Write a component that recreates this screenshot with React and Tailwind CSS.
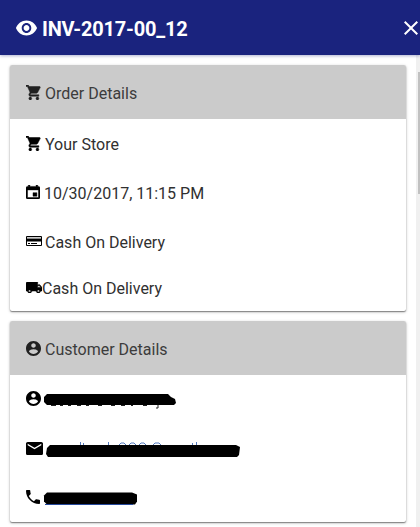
import React from 'react';

const paths = {
    eye: 'M12 4.5C7 4.5 2.73 7.61 1 12c1.73 4.39 6 7.5 11 7.5s9.27-3.11 11-7.5c-1.73-4.39-6-7.5-11-7.5zM12 17c-2.76 0-5-2.24-5-5s2.24-5 5-5 5 2.24 5 5-2.24 5-5 5zm0-8c-1.66 0-3 1.34-3 3s1.34 3 3 3 3-1.34 3-3-1.34-3-3-3z',
    close: 'M19 6.41L17.59 5 12 10.59 6.41 5 5 6.41 10.59 12 5 17.59 6.41 19 12 13.41 17.59 19 19 17.59 13.41 12z',
    cart: 'M7 18c-1.1 0-1.99.9-1.99 2S5.9 22 7 22s2-.9 2-2-.9-2-2-2zM1 2v2h2l3.6 7.59-1.35 2.45c-.16.28-.25.61-.25.96 0 1.1.9 2 2 2h12v-2H7.42c-.14 0-.25-.11-.25-.25l.03-.12.9-1.63h7.45c.75 0 1.41-.41 1.75-1.03l3.58-6.49c.08-.14.12-.31.12-.48 0-.55-.45-1-1-1H5.21l-.94-2H1zm16 16c-1.1 0-1.99.9-1.99 2s.89 2 1.99 2 2-.9 2-2-.9-2-2-2z',
    event: 'M17 12h-5v5h5v-5zM16 1v2H8V1H6v2H5c-1.11 0-1.99.9-1.99 2L3 19c0 1.1.89 2 2 2h14c1.1 0 2-.9 2-2V5c0-1.1-.9-2-2-2h-1V1h-2zm3 18H5V8h14v11z',
    truck: 'M20 8h-3V4H3c-1.1 0-2 .9-2 2v11h2c0 1.66 1.34 3 3 3s3-1.34 3-3h6c0 1.66 1.34 3 3 3s3-1.34 3-3h2v-5l-3-4zM6 18.5c-.83 0-1.5-.67-1.5-1.5s.67-1.5 1.5-1.5 1.5.67 1.5 1.5-.67 1.5-1.5 1.5zm13.5-9l1.96 2.5H17V9.5h2.5zm-1.5 9c-.83 0-1.5-.67-1.5-1.5s.67-1.5 1.5-1.5 1.5.67 1.5 1.5-.67 1.5-1.5 1.5z',
    account: 'M12 2C6.48 2 2 6.48 2 12s4.48 10 10 10 10-4.48 10-10S17.52 2 12 2zm0 3c1.66 0 3 1.34 3 3s-1.34 3-3 3-3-1.34-3-3 1.34-3 3-3zm0 14.2c-2.5 0-4.71-1.28-6-3.22.03-1.99 4-3.08 6-3.08 1.99 0 5.97 1.09 6 3.08-1.29 1.94-3.5 3.22-6 3.22z',
    mail: 'M20 4H4c-1.1 0-1.99.9-1.99 2L2 18c0 1.1.9 2 2 2h16c1.1 0 2-.9 2-2V6c0-1.1-.9-2-2-2zm0 4l-8 5-8-5V6l8 5 8-5v2z',
    phone: 'M6.62 10.79c1.44 2.83 3.76 5.14 6.59 6.59l2.2-2.2c.27-.27.67-.36 1.02-.24 1.12.37 2.33.57 3.57.57.55 0 1 .45 1 1V20c0 .55-.45 1-1 1-9.39 0-17-7.61-17-17 0-.55.45-1 1-1h3.5c.55 0 1 .45 1 1 0 1.25.2 2.45.57 3.57.11.35.03.74-.25 1.02l-2.2 2.2z',
};

const Icon = ({ name, box = '0 0 24 24', className }) => (
    <svg viewBox={box} preserveAspectRatio="none" fill="currentColor" className={`shrink-0 ${className}`}>
        <path d={paths[name]} />
    </svg>
);

const CartIcon = () => (
    <Icon name="cart" box="1 2 21 20" className="w-[15px] h-[15px] mr-[5px] -mt-[3px] stroke-current stroke-[0.7]" />
);
const AccountIcon = () => <Icon name="account" box="2 2 20 20" className="w-[15px] h-[15px] -mt-[3px]" />;

const CardIcon = () => (
    <svg viewBox="0 0 16 11" className="w-4 h-[11px] shrink-0 mr-1 -mt-[3px]">
        <path d="M.5.5h15v9H.5z" fill="#fff" stroke="#000" />
        <path d="M0 2.500h16v3H0zM2 7h2v1H2zM5 7h6v1H5z" fill="#000" />
        <path d="M1 1.500h14v1H1z" fill="#999" />
    </svg>
);

const Card = ({ title, icon, children }) => (
    <section className="w-[396px] rounded-[2px] bg-white shadow-[0_1px_3px_rgba(0,0,0,0.3),0_1px_1px_rgba(0,0,0,0.35)]">
        <h2 className="flex items-center h-[54px] pl-4 pt-[3px] rounded-t-[2px] bg-[#cbcbcb] text-[#212121]">
            {icon}
            <span className="-ml-px text-[#3c3c3c]">{title}</span>
        </h2>
        {children}
    </section>
);

const Row = ({ className, children }) => (
    <div className={`flex items-center pl-4 ${className}`}>{children}</div>
);

const App = () => {
    return (
        <div className="w-[420px] h-[527px] overflow-hidden bg-white font-['Roboto',sans-serif] text-base text-[#303030]">
            <header className="relative flex items-center justify-between h-[55px] pl-[15px] bg-[#1a237e] text-white shadow-[0_1px_3px_rgba(26,35,126,0.35)]">
                <div className="flex items-center">
                    <Icon name="eye" className="w-[23px] h-6 mr-1" />
                    <h1 className="text-xl font-bold tracking-[-0.2px] pt-[3px]">INV-2017-00_12</h1>
                </div>
                <Icon name="close" className="w-6 h-6 -mr-[3px]" />
            </header>

            <div className="flex justify-between h-[472px]">
                <main className="flex flex-col gap-[10px] pt-[10px] pl-[10px]">
                    <Card title="Order Details" icon={<CartIcon />}>
                        <Row className="h-[51px] text-black">
                            <CartIcon />
                            <span className="-ml-px text-[#303030]">Your Store</span>
                        </Row>
                        <Row className="h-[47px]">
                            <Icon name="event" box="3 1 18 20" className="w-[14px] h-[14px] mr-1 -mt-[3px] text-black stroke-current stroke-[0.6]" />
                            10/30/2017, 11:15 PM
                        </Row>
                        <Row className="h-[51px]">
                            <CardIcon />
                            <span className="-ml-px">Cash On Delivery</span>
                        </Row>
                        <Row className="h-[43px] pb-[2px]">
                            <Icon name="truck" box="1 4 22 16" className="w-4 h-[11px] -mt-[2px] text-black stroke-current stroke-[0.8]" />
                            Cash On Delivery
                        </Row>
                    </Card>

                    <Card
                        title="Customer Details"
                        icon={
                            <span className="flex mr-[5px]">
                                <AccountIcon />
                            </span>
                        }
                    >
                        <Row className="h-[50px] text-black">
                            <AccountIcon />
                            {/* contact values are masked */}
                            <svg viewBox="0 0 134 18" className="w-[134px] h-[18px] ml-[2px]">
                                <path d="M4 3h121l3 3 4 2 1 4-2 2H4l-3-3V6z" />
                                <path d="M8 14.5h5m4 0h3m5 0h3m6 0h4m5 0h3m9 0h4m9 0h4m6 0h4m6 0h2m10 0h4M115 14v3h-2" stroke="#212121" fill="none" />
                            </svg>
                        </Row>
                        <Row className="h-[48px] text-black">
                            <Icon name="mail" box="2 4 20 16" className="w-[17px] h-[13px] -mt-[2px]" />
                            <svg viewBox="0 0 196 18" className="w-[196px] h-[18px] ml-[2px] mt-1">
                                <path d="M35.500 0v4M38.500 1v3M63.500 0v4M74 3l2-2h3l2 2m3 0 2-2h3l2 2m3 0 2-2h3l2 2m6 1 3-3h4l3 3M147.500 1v3M151.500 0v4" stroke="#5379bd" fill="none" />
                                <path d="M5 3h186l4 2-1 8-2 2H3l-2-3 1-6z" />
                            </svg>
                        </Row>
                        <Row className="h-[49px] text-black">
                            <Icon name="phone" box="3 3 18 18" className="w-[14px] h-[14px] -mt-[2px]" />
                            <svg viewBox="0 0 94 16" className="w-[94px] h-4 ml-[3px]">
                                <path d="M4 2.500h85l5 2v7l-2 3H4l-3-3v-6z" />
                                <path d="M2 14.500h88" stroke="#24489b" />
                            </svg>
                        </Row>
                    </Card>
                </main>

                {/* scrollbar */}
                <div className="w-1 pt-[17px] pl-[2px] bg-[#f0f0f0]">
                    <div className="h-[122px] bg-[#c1c1c1]" />
                </div>
            </div>
        </div>
    );
};

export default App;
